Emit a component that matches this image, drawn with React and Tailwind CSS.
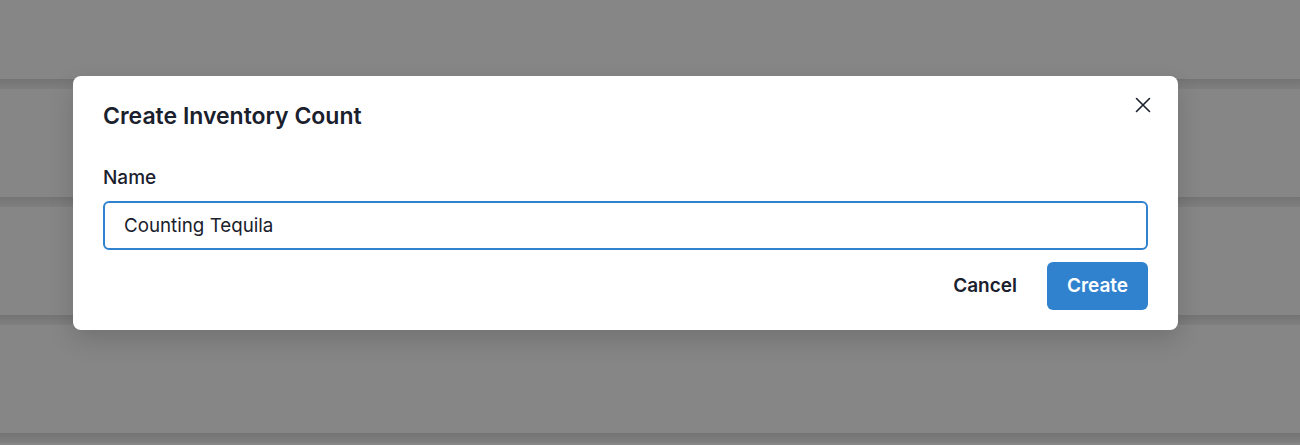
import { useState } from "react";

function Band() {
  return <div className="h-[10px] bg-gradient-to-b from-[#747474] to-[#7f7f7f]" />;
}

export default function App() {
  const [name, setName] = useState("Counting Tequila");

  return (
    <div
      className="relative h-[445px] w-full overflow-hidden bg-[#868686]"
      style={{ fontFamily: "Inter, 'Noto Sans', sans-serif" }}
    >
      <div className="flex flex-col">
        <div className="h-[79px]" />
        <Band />
        <div className="h-[108px]" />
        <Band />
        <div className="h-[108px]" />
        <Band />
        <div className="h-[108px]" />
        <Band />
      </div>

      <div className="absolute left-[73px] top-[76px] w-[1105px] rounded-lg bg-white shadow-[0_10px_25px_rgba(0,0,0,0.15)]">
        <button className="absolute right-[20px] top-[14px] flex h-[30px] w-[30px] items-center justify-center rounded-md text-[#1a202c]">
          <svg width="16" height="16" viewBox="0 0 16 16" fill="none" stroke="currentColor" strokeWidth="1.6" strokeLinecap="round">
            <path d="M1.5 1.5 L14.5 14.5 M14.5 1.5 L1.5 14.5" />
          </svg>
        </button>

        <div className="px-[30px] pt-[25px]">
          <h2 className="text-[23px] font-semibold leading-[30px] text-[#1a202c]">Create Inventory Count</h2>
        </div>

        <div className="px-[30px] pt-[35px]">
          <label className="block text-[19px] font-medium leading-[24px] text-[#1a202c]">Name</label>
          <input
            type="text"
            value={name}
            onChange={(e) => setName(e.target.value)}
            className="mt-[11px] h-[49px] w-full rounded-md border-2 border-[#3182ce] px-[19px] text-[18.75px] text-[#1a202c] caret-[#1a202c] outline-none"
          />
        </div>

        <div className="flex items-center justify-end gap-[10px] px-[30px] pb-[20px] pt-[12px]">
          <button className="h-[48px] rounded-md px-[20px] text-[19px] font-semibold text-[#1a202c]">Cancel</button>
          <button className="h-[48px] w-[101px] rounded-md bg-[#3182ce] text-[19px] font-semibold text-white">Create</button>
        </div>
      </div>
    </div>
  );
}
